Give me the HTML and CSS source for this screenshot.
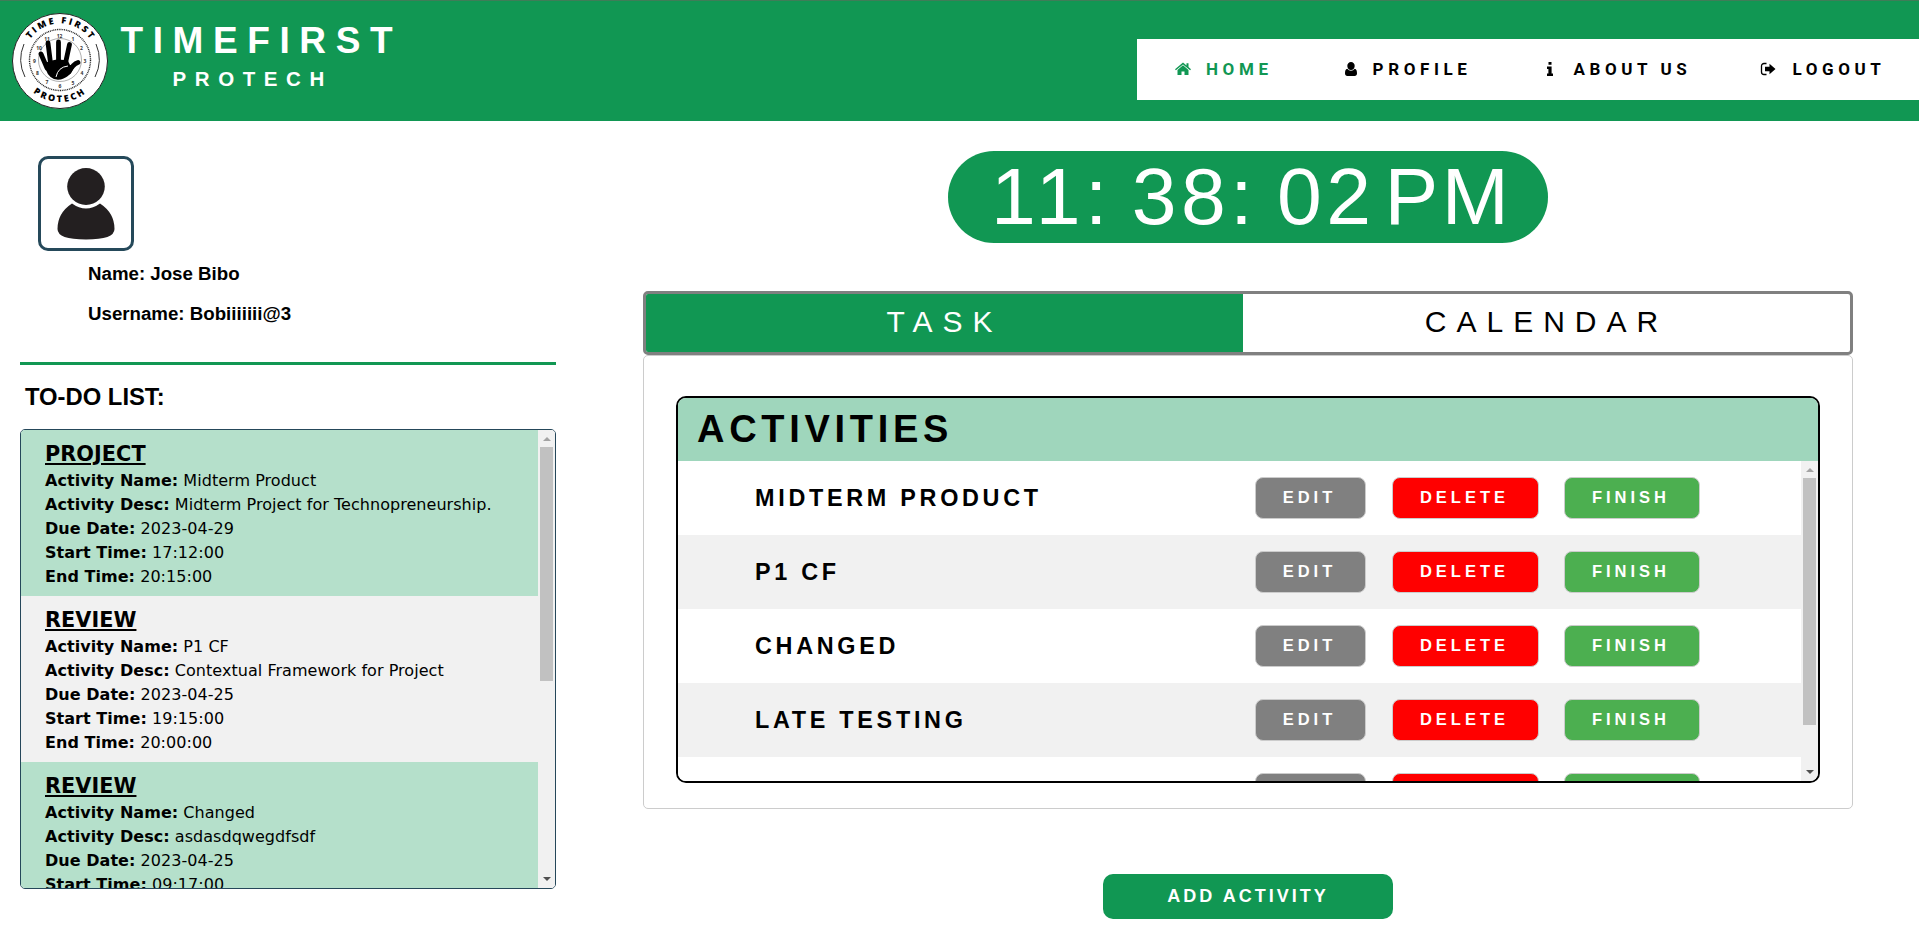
FILE: index.html
```
<!DOCTYPE html>
<html lang="en">
<head>
<meta charset="utf-8">
<title>Time First Protech</title>
<link rel="stylesheet" href="styles.css">
</head>
<body>
<header class="topbar">
  <svg class="logo" viewBox="0 0 96 96">
    <defs>
      <path id="arc-top" d="M11.500 47a36.500 36.500 0 0 1 73 0"/>
      <path id="arc-bottom" d="M6 47a42 42 0 0 0 84 0"/>
    </defs>
    <circle cx="48" cy="48" r="47.5" fill="#fff" stroke="#222" stroke-width="1"/>
    <circle cx="48" cy="47" r="30.5" fill="none" stroke="#222" stroke-width="1.4" stroke-dasharray="1 .8"/>
    <circle cx="48" cy="47" r="21.500" fill="none" stroke="#777" stroke-width=".6"/>
    <path d="M12 31a39 39 0 0 0 1 33M84 31a39 39 0 0 1-1 33" fill="none" stroke="#333" stroke-width="1"/>
    <text class="logo-arc"><textPath href="#arc-top" startOffset="51%" text-anchor="middle">TIME FIRST</textPath></text>
    <text class="logo-arc"><textPath href="#arc-bottom" startOffset="50%" text-anchor="middle">PROTECH</textPath></text>
    <g class="logo-num">
      <text x="47.500" y="25">12</text><text x="61" y="28">1</text><text x="69.500" y="37">2</text><text x="73" y="50">3</text>
      <text x="70" y="62">4</text><text x="61" y="71.500">5</text><text x="48" y="75">6</text><text x="35" y="71">7</text>
      <text x="25.500" y="62">8</text><text x="22.500" y="50">9</text><text x="27" y="37">10</text><text x="35" y="28">11</text>
    </g>
    <g fill="none" stroke="#000" stroke-width="4.800" stroke-linecap="round">
      <path d="M38.500 50 36 30M46.500 48V29M53.500 50 57.500 31.500M35 55 29 41M57 59Q61 51 66 49.500"/>
    </g>
    <path d="M33 50Q45 44 56 48L58 52 63 52Q58 66 46 66.800 37 66 34 57Z" fill="#000"/>
    <path d="M44 64Q46 54 56 53" fill="none" stroke="#fff" stroke-width="1"/>
  </svg>
  <div class="brand">
    <div class="brand-name">TIMEFIRST</div>
    <div class="brand-sub">PROTECH</div>
  </div>
  <nav class="nav">
    <a class="nav-item active"><svg class="ico" viewBox="0 0 16 16"><path d="M8 4.300 2.500 9v5H6.500V10.500H9.500V14h4V9z"/><path d="M8 1.500 0 8.200l.9 1L8 3.400l7.100 5.800.9-1-2.500-2.100V2.300h-2V4.400z"/></svg>HOME</a>
    <a class="nav-item"><svg class="ico" viewBox="0 0 14 16"><path d="M7 1a3.700 3.700 0 0 1 3.700 3.900C10.700 7.200 9 9 7 9S3.300 7.200 3.300 4.900A3.700 3.700 0 0 1 7 1zM3.300 7.800C1.500 8.100 1 10 1 12.500 1 14 2 15 3.300 15h7.400C12 15 13 14 13 12.500c0-2.500-.5-4.400-2.300-4.700A5 5 0 0 1 7 9.800a5 5 0 0 1-3.700-2z"/></svg>PROFILE</a>
    <a class="nav-item"><svg class="ico" viewBox="0 0 8 16"><path d="M2.500 1h3v2.800h-3zM1 5.500h4.600v7H7V15H1v-2.500h1.400V8H1z"/></svg>ABOUT US</a>
    <a class="nav-item"><svg class="ico" viewBox="0 0 16 16"><path d="M6.500 2.500H4a2.500 2.500 0 0 0-2.500 2.500v6A2.500 2.500 0 0 0 4 13.500h2.500" fill="none" stroke="currentColor" stroke-width="1.300"/><path d="M9.500 2.700 15.500 8 9.500 13.300V10.200H5V5.800H9.500z"/></svg>LOGOUT</a>
  </nav>
</header>
<main class="page">
  <aside class="side">
    <div class="avatar"><svg viewBox="0 0 89 89"><ellipse cx="44.500" cy="27.500" rx="18.800" ry="18.500" fill="#231f20"/><path d="M30.500 44.500Q44.500 54.500 58.500 44.500 73 54 73 70 73 80.500 44.500 80.500 16 80.500 16 70 16 54 30.500 44.500Z" fill="#231f20"/></svg></div>
    <p class="user-line">Name: Jose Bibo</p>
    <p class="user-line">Username: Bobiiiiiii@3</p>
    <div class="rule"></div>
    <h2 class="todo-title">TO-DO LIST:</h2>
    <div class="todo">
      <div class="todo-list">
        <section class="todo-item"><h3>PROJECT</h3><p><b>Activity Name:</b> Midterm Product</p><p><b>Activity Desc:</b> Midterm Project for Technopreneurship.</p><p><b>Due Date:</b> 2023-04-29</p><p><b>Start Time:</b> 17:12:00</p><p><b>End Time:</b> 20:15:00</p></section>
        <section class="todo-item"><h3>REVIEW</h3><p><b>Activity Name:</b> P1 CF</p><p><b>Activity Desc:</b> Contextual Framework for Project</p><p><b>Due Date:</b> 2023-04-25</p><p><b>Start Time:</b> 19:15:00</p><p><b>End Time:</b> 20:00:00</p></section>
        <section class="todo-item"><h3>REVIEW</h3><p><b>Activity Name:</b> Changed</p><p><b>Activity Desc:</b> asdasdqwegdfsdf</p><p><b>Due Date:</b> 2023-04-25</p><p><b>Start Time:</b> 09:17:00</p></section>
      </div>
      <div class="scroll"><i class="up"></i><i class="thumb todo-thumb"></i><i class="down"></i></div>
    </div>
  </aside>
  <div class="content">
    <div class="clock"><span><span class="tight">1</span>1: 38: 02</span><span class="ampm">PM</span></div>
    <div class="tabs"><div class="tab tab-on">TASK</div><div class="tab">CALENDAR</div></div>
    <div class="panel">
      <div class="activities">
        <h1 class="act-title">ACTIVITIES</h1>
        <div class="act-body">
          <div class="act-rows">
            <div class="row"><span class="act-name">MIDTERM PRODUCT</span><button class="btn edit">EDIT</button><button class="btn delete">DELETE</button><button class="btn finish">FINISH</button></div>
            <div class="row"><span class="act-name">P1 CF</span><button class="btn edit">EDIT</button><button class="btn delete">DELETE</button><button class="btn finish">FINISH</button></div>
            <div class="row"><span class="act-name">CHANGED</span><button class="btn edit">EDIT</button><button class="btn delete">DELETE</button><button class="btn finish">FINISH</button></div>
            <div class="row"><span class="act-name">LATE TESTING</span><button class="btn edit">EDIT</button><button class="btn delete">DELETE</button><button class="btn finish">FINISH</button></div>
            <div class="row"><span class="act-name"></span><button class="btn edit"></button><button class="btn delete"></button><button class="btn finish"></button></div>
          </div>
          <div class="scroll"><i class="up"></i><i class="thumb act-thumb"></i><i class="down"></i></div>
        </div>
      </div>
    </div>
    <button class="add">ADD ACTIVITY</button>
  </div>
</main>
</body>
</html>
```
FILE: styles.css
```
* { box-sizing: border-box; margin: 0; padding: 0; }
body { width: 1919px; height: 947px; overflow: hidden; background: #fff; color: #000; font-family: "Liberation Sans", Arial, sans-serif; }

.topbar { display: flex; height: 121px; background: #119753; border-top: 1px solid #3f7d58; }
.logo { width: 96px; height: 96px; margin: 12px 0 0 11.5px; flex: none; }
.logo-arc { font: 800 9px "Open Sans", sans-serif; letter-spacing: 2.300px; }
.logo-num text { font: bold 5px "Open Sans", sans-serif; text-anchor: middle; fill: #333; }
.brand { width: 276px; margin-left: 13px; padding-top: 16px; color: #fff; font-weight: bold; }
.brand-name { font-size: 37px; line-height: 48px; letter-spacing: 9.600px; white-space: nowrap; }
.brand-sub { margin-left: 52px; font-size: 20.500px; line-height: 27px; letter-spacing: 8.600px; }
.nav { display: flex; width: 782px; height: 61px; margin: 38px 0 0 auto; background: #fff; }
.nav-item { display: flex; align-items: center; height: 60px; font: bold 17px Roboto, sans-serif; letter-spacing: 4.600px; color: #000; white-space: nowrap; }
.nav-item.active { color: #119753; }
.nav-item:nth-child(1) { margin-left: 38px; }
.nav-item:nth-child(2) { margin-left: 71px; }
.nav-item:nth-child(3) { margin-left: 75px; }
.nav-item:nth-child(4) { margin-left: 69px; }
.ico { height: 16px; margin-right: 15px; fill: currentColor; }
.nav-item:nth-child(3) .ico { margin-right: 19px; }
.nav-item:nth-child(4) .ico { margin-right: 16px; }

.page { display: flex; }
.side { width: 536px; margin-left: 20px; padding-top: 35px; }
.avatar { width: 96px; height: 95px; margin-left: 18px; border: 3px solid #25495a; border-radius: 10px; }
.avatar svg { display: block; width: 90px; height: 89px; }
.user-line { margin-left: 68px; font-size: 18.700px; font-weight: bold; line-height: 40px; }
.avatar + .user-line { margin-top: 3px; }
.rule { height: 3px; margin-top: 28px; background: #119753; }
.todo-title { margin: 17px 0 0 5px; font-size: 23.800px; line-height: 30px; }
.todo { display: flex; height: 460px; margin-top: 17px; border: 1px solid #25475a; border-radius: 5px; overflow: hidden; }
.todo-list { flex: 1; overflow: hidden; }
.todo-item { height: 166px; padding: 10px 0 0 24px; background: #b5e0cb; font: 16px/24px "DejaVu Sans", Verdana, sans-serif; letter-spacing: .04px; white-space: nowrap; }
.todo-item:nth-child(2) { background: #f1f1f1; }
.todo-item h3 { padding-bottom: 1px; font-size: 20.800px; line-height: 28px; text-decoration: underline; }
.scroll { display: flex; flex-direction: column; align-items: center; width: 17px; padding: 7px 0; background: #f1f1f1; }
.up { border: 4px solid transparent; border-top: 0; border-bottom-color: #a3a3a3; }
.down { margin-top: auto; border: 4px solid transparent; border-bottom: 0; border-top-color: #505050; }
.thumb { width: 13px; margin-top: 6px; background: #c1c1c1; }
.todo-thumb { height: 234px; }
.act-thumb { height: 247px; }

.content { display: flex; flex-direction: column; width: 1210px; margin-left: 87px; padding-top: 30px; }
.clock { display: flex; align-self: center; width: 600px; height: 92px; padding-left: 43px; border-radius: 46px; background: #119753; color: #fff; font-size: 80.500px; line-height: 90px; letter-spacing: 4.500px; word-spacing: -7px; white-space: nowrap; }
.tight { letter-spacing: 0; }
.ampm { margin-left: 9px; letter-spacing: 3.500px; }
.tabs { display: flex; height: 64px; margin-top: 48px; border: 3px solid #808080; border-radius: 5px; background: #fff; overflow: hidden; }
.tab { width: 607px; text-align: center; font-size: 30px; line-height: 56px; letter-spacing: 10px; }
.tab-on { width: 597px; background: #119753; color: #fff; }
.panel { height: 454px; padding: 40px 32px 0; border: 1px solid #ccc; border-radius: 5px; }
.activities { height: 387px; border: 2px solid #000; border-radius: 10px; overflow: hidden; }
.act-title { height: 63px; padding-left: 19px; background: #9fd6bc; font-size: 38px; line-height: 62px; letter-spacing: 4.700px; }
.act-body { display: flex; height: 320px; }
.act-rows { flex: 1; overflow: hidden; }
.row { display: flex; align-items: center; height: 74px; padding-left: 77px; background: #fff; }
.row:nth-child(even) { background: #f1f1f1; }
.act-name { width: 500px; font-size: 23.400px; font-weight: bold; letter-spacing: 3.700px; white-space: nowrap; }
.btn { height: 42px; padding: 0 2px 1px 0; border: 1px solid #ccc; border-radius: 8px; color: #fff; font: bold 16.500px "Liberation Sans", sans-serif; letter-spacing: 4px; }
.edit { width: 111px; background: #808080; }
.delete { width: 147px; margin-left: 26px; background: #f00; }
.finish { width: 136px; margin-left: 25px; background: #4caf50; }
.add { align-self: center; width: 290px; height: 45px; margin-top: 65px; border: 0; border-radius: 10px; background: #119753; color: #fff; font: bold 18px "Liberation Sans", sans-serif; letter-spacing: 3px; }
```
